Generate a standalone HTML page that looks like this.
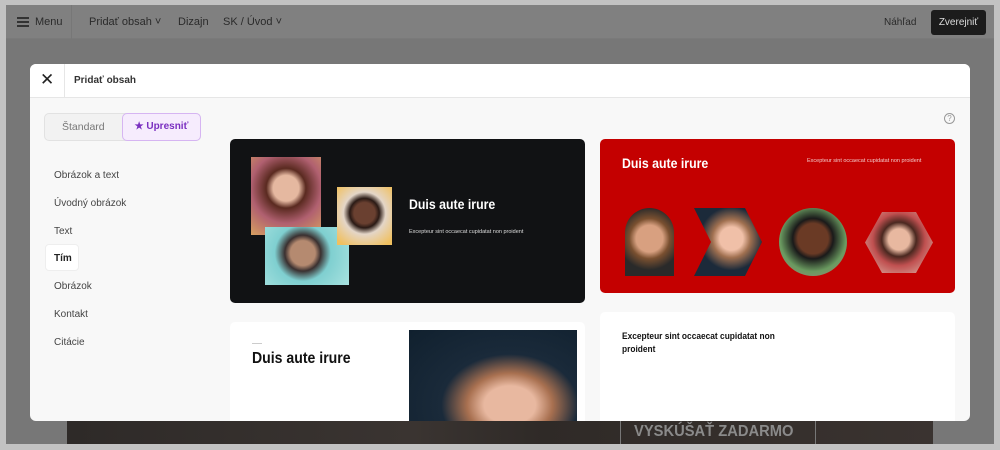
<!DOCTYPE html>
<html><head><meta charset="utf-8"><style>
*{box-sizing:border-box;margin:0;padding:0}
body{width:1000px;height:450px;overflow:hidden;background:#c2c2c2;font-family:"Liberation Sans",sans-serif;position:relative}
.abs{position:absolute}
.frame{left:6px;top:5px;width:988px;height:439px;background:#777;overflow:hidden}
.top{left:0;top:0;width:988px;height:34px;background:#808080;border-bottom:1px solid #7a7a7a}
.tt{font-size:11px;color:#2a2a2a;top:11px}
.modal{left:24px;top:59px;width:940px;height:357px;background:#f8f8f8;border-radius:6px;overflow:hidden}
.mh{left:0;top:0;width:940px;height:34px;background:#fff;border-bottom:1px solid #e6e6e6}
.nav{font-size:10px;color:#444;left:24px}
.card{border-radius:5px;overflow:hidden}
.ph{position:absolute}
.cond{transform:scaleX(.88);transform-origin:left top}
</style></head><body>
<div class="abs frame">
 <div class="abs top">
  <div class="abs" style="left:11px;top:12px;width:12px;height:1.5px;background:#333;box-shadow:0 4px 0 #333,0 8px 0 #333"></div>
  <div class="abs tt" style="left:29px">Menu</div>
  <div class="abs" style="left:65px;top:0;width:1px;height:34px;background:#777"></div>
  <div class="abs tt" style="left:83px">Pridať obsah ˅</div>
  <div class="abs tt" style="left:172px">Dizajn</div>
  <div class="abs tt" style="left:217px">SK / Úvod ˅</div>
  <div class="abs tt" style="left:878px;top:12px;font-size:10px">Náhľad</div>
  <div class="abs" style="left:925px;top:5px;width:55px;height:25px;background:#1c1c1c;border-radius:3px;color:#ddd;font-size:10px;text-align:center;line-height:25px">Zverejniť</div>
 </div>
 <div class="abs" style="left:61px;top:416px;width:866px;height:23px;background:linear-gradient(90deg,#2e2a28,#3a3431 40%,#2f2a27 55%,#3a3330)">
  <div class="abs" style="left:553px;top:0;width:1px;height:23px;background:#777"></div>
  <div class="abs" style="left:748px;top:0;width:1px;height:23px;background:#777"></div>
  <div class="abs cond" style="left:567px;top:2px;font-size:16px;font-weight:bold;color:#8a8a8a;transform:scaleX(.92)">VYSKÚŠAŤ ZADARMO</div>
 </div>
 <div class="abs modal">
  <div class="abs mh">
   <div class="abs" style="left:10px;top:6px;font-size:17px;color:#222">✕</div>
   <div class="abs" style="left:34px;top:0;width:1px;height:34px;background:#e6e6e6"></div>
   <div class="abs" style="left:44px;top:11px;font-size:10px;font-weight:bold;color:#333">Pridať obsah</div>
  </div>
  <div class="abs" style="left:14px;top:49px;width:157px;height:28px;border:1px solid #e2e2e2;border-radius:5px;background:#f2f2f2"></div>
  <div class="abs" style="left:32px;top:57px;font-size:10.5px;color:#777">Štandard</div>
  <div class="abs" style="left:92px;top:49px;width:79px;height:28px;border:1px solid #d6b5f2;border-radius:5px;background:#f6ecfd;color:#7a2fc0;font-size:10px;font-weight:bold;text-align:center;line-height:26px">★ Upresniť</div>
  <div class="abs" style="left:914px;top:49px;width:11px;height:11px;border:1px solid #999;border-radius:50%;font-size:8px;color:#999;text-align:center;line-height:9px">?</div>
  <div class="abs nav" style="top:106px">Obrázok a text</div>
  <div class="abs nav" style="top:134px">Úvodný obrázok</div>
  <div class="abs nav" style="top:162px">Text</div>
  <div class="abs" style="left:15px;top:180px;width:34px;height:27px;background:#fff;border-radius:4px;border:1px solid #eee"></div>
  <div class="abs nav" style="top:189px;font-weight:bold;color:#222">Tím</div>
  <div class="abs nav" style="top:217px">Obrázok</div>
  <div class="abs nav" style="top:245px">Kontakt</div>
  <div class="abs nav" style="top:273px">Citácie</div>

  <div class="abs card" style="left:200px;top:75px;width:355px;height:164px;background:#111214">
   <div class="ph" style="left:21px;top:18px;width:70px;height:78px;background:radial-gradient(circle at 50% 40%,#e5b8a0 0 22%,#5a2a20 34%,#b06070 60%,#d8a060)"></div>
   <div class="ph" style="left:35px;top:88px;width:84px;height:58px;background:radial-gradient(circle at 45% 45%,#b58a70 0 22%,#3a3030 32%,#7fcfd0 50%,#a8e2e0)"></div>
   <div class="ph" style="left:107px;top:48px;width:55px;height:58px;background:radial-gradient(circle at 50% 45%,#6a4030 0 25%,#2a1a15 35%,#e4d6c8 50%,#f0c060 90%)"></div>
   <div class="abs cond" style="left:179px;top:57px;font-size:14px;font-weight:bold;color:#fff">Duis aute irure</div>
   <div class="abs" style="left:179px;top:90px;font-size:5.5px;color:#ddd">Excepteur sint occaecat cupidatat non proident</div>
  </div>

  <div class="abs card" style="left:570px;top:75px;width:355px;height:154px;background:#c40000">
   <div class="abs cond" style="left:22px;top:16px;font-size:14px;font-weight:bold;color:#fff">Duis aute irure</div>
   <div class="abs" style="left:207px;top:19px;font-size:5.5px;color:#f3c8c8">Excepteur sint occaecat cupidatat non proident</div>
   <div class="ph" style="left:25px;top:69px;width:49px;height:68px;border-radius:25px 25px 0 0;background:radial-gradient(circle at 50% 45%,#d8a080 0 30%,#7a5030 45%,#2a2a2a 70%)"></div>
   <div class="ph" style="left:94px;top:69px;width:68px;height:68px;clip-path:polygon(0 0,75% 0,100% 50%,75% 100%,0 100%,25% 50%);background:radial-gradient(circle at 55% 45%,#f0c0a8 0 22%,#a07050 36%,#1c2a3a 60%)"></div>
   <div class="ph" style="left:179px;top:69px;width:68px;height:68px;border-radius:50%;background:radial-gradient(circle at 50% 45%,#6a3a25 0 30%,#1a1a1a 40%,#6a9a60 65%,#b08080)"></div>
   <div class="ph" style="left:265px;top:73px;width:68px;height:61px;clip-path:polygon(25% 0,75% 0,100% 50%,75% 100%,25% 100%,0 50%);background:radial-gradient(circle at 50% 45%,#e8b8a0 0 22%,#4a2820 36%,#c05050 55%,#e0c0b0)"></div>
  </div>

  <div class="abs card" style="left:200px;top:258px;width:355px;height:110px;background:#fff">
   <div class="abs" style="left:22px;top:21px;width:10px;height:1px;background:#ccc"></div>
   <div class="abs cond" style="left:22px;top:28px;font-size:16px;font-weight:bold;color:#111">Duis aute irure</div>
   <div class="ph" style="left:179px;top:8px;width:168px;height:100px;background:radial-gradient(ellipse at 60% 75%,#e8b8a0 0 18%,#a87050 30%,#1a2a3a 48%,#10202e)"></div>
  </div>

  <div class="abs card" style="left:570px;top:248px;width:355px;height:120px;background:#fff">
   <div class="abs cond" style="left:22px;top:18px;font-size:9.5px;font-weight:bold;color:#111;line-height:13px;width:200px">Excepteur sint occaecat cupidatat non proident</div>
  </div>
 </div>
</div>
</body></html>
